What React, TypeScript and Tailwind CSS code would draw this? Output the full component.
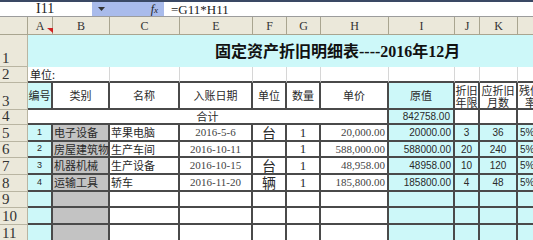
import React from "react";

const SERIF = "font-[family-name:Liberation_Serif,Noto_Sans_CJK_SC,serif]";
const SANS = "font-[family-name:Liberation_Sans,Noto_Sans_CJK_SC,sans-serif]";
const CJK = "font-[family-name:Noto_Sans_CJK_SC,sans-serif]";

const RH =
  "flex items-end pl-[2px] bg-[#ebe8da] border-r border-b border-[#b9b5a2] text-[15px] leading-[15px] text-[#333] font-[family-name:Liberation_Serif,serif]";
const CH =
  "flex items-center justify-center bg-[#ebe8da] border-r border-b border-[#a9a590] text-[12px] text-[#333] font-[family-name:Liberation_Serif,serif]";
const T = "flex items-center whitespace-nowrap overflow-visible border-r-2 border-b-2 border-[#4a4a4a] text-[#2a2a2a]";
const CY = "bg-[#cdf8f9]";
const GR = "bg-[#c3c3c3]";

function Cell({ className = "", children }: { className?: string; children?: React.ReactNode }) {
  return <div className={`${T} ${className}`}>{children}</div>;
}

type Row = {
  n: number;
  id: string;
  cat: string;
  name: string;
  date: string;
  unit: string;
  qty: string;
  price: string;
  orig: string;
  yrs: string;
  months: string;
  rate: string;
};

const data: Row[] = [
  { n: 5, id: "1", cat: "电子设备", name: "苹果电脑", date: "2016-5-6", unit: "台", qty: "1", price: "20,000.00", orig: "20000.00", yrs: "3", months: "36", rate: "5%" },
  { n: 6, id: "2", cat: "房屋建筑物", name: "生产车间", date: "2016-10-11", unit: "", qty: "1", price: "588,000.00", orig: "588000.00", yrs: "20", months: "240", rate: "5%" },
  { n: 7, id: "3", cat: "机器机械", name: "生产设备", date: "2016-10-15", unit: "台", qty: "1", price: "48,958.00", orig: "48958.00", yrs: "10", months: "120", rate: "5%" },
  { n: 8, id: "4", cat: "运输工具", name: "轿车", date: "2016-11-20", unit: "辆", qty: "1", price: "185,800.00", orig: "185800.00", yrs: "4", months: "48", rate: "5%" },
];

export default function App() {
  return (
    <div className={`relative w-[533px] h-[240px] overflow-hidden bg-white ${CJK}`}>
      {/* formula bar */}
      <div className="h-[2px] bg-[#3a4864]" />
      <div className="flex h-[15px] border-b border-[#9c9c9c]">
        <div className={`w-[92px] flex items-center pl-[36px] text-[14px] leading-none text-[#222] ${SERIF}`}>I11</div>
        <div className="w-[72px] bg-[#a9bbeb] flex items-center justify-between pl-[6px] pr-[6px]">
          <svg width="7" height="4" viewBox="0 0 7 4">
            <path d="M0 0 L7 0 L3.5 4 Z" fill="#333" />
          </svg>
          <span className={`italic text-[12px] leading-none text-[#222] ${SERIF}`}>
            f<span className="text-[9px]">x</span>
          </span>
        </div>
        <div className={`flex-1 flex items-center pl-[7px] text-[13px] leading-none text-[#222] ${SERIF}`}>=G11*H11</div>
      </div>

      {/* sheet */}
      <div className="grid grid-cols-[28px_25px_57px_70px_73px_34px_34px_68px_66px_25px_38px_40px] grid-rows-[18px_32px_16px_27px_15px_17px_16px_17px_17px_16px_17px_17px]">
        {/* column headers */}
        <div className={CH} />
        {["A", "B", "C", "E", "F", "G", "H", "I", "J", "K", "L"].map((c) => (
          <div key={c} className={CH}>
            {c}
          </div>
        ))}

        {/* row 1 */}
        <div className={RH}>1</div>
        <div className={`col-span-11 ${CY} flex items-center pl-[187px] pt-[1px] whitespace-nowrap`}>
          <span className={`text-[16px] font-bold text-[#111] leading-none ${SERIF}`}>固定资产折旧明细表----2016年12月</span>
        </div>

        {/* row 2 */}
        <div className={RH}>2</div>
        <div className="col-span-2 flex items-center pl-[2px] text-[11px] text-[#222] border-r border-[#d6d6d6] border-b-2 border-b-[#4a4a4a]">单位:</div>
        {Array.from({ length: 9 }).map((_, i) => (
          <div key={i} className="border-r border-[#d6d6d6] border-b-2 border-b-[#4a4a4a]" />
        ))}

        {/* row 3 */}
        <div className={RH}>3</div>
        <Cell className={`${CY} justify-center text-[11px]`}>编号</Cell>
        <Cell className="justify-center text-[11px]">类别</Cell>
        <Cell className="justify-center text-[11px]">名称</Cell>
        <Cell className="justify-center text-[11px]">入账日期</Cell>
        <Cell className="justify-center text-[11px]">单位</Cell>
        <Cell className="justify-center text-[11px]">数量</Cell>
        <Cell className="justify-center text-[11px]">单价</Cell>
        <Cell className={`${CY} justify-center text-[11px]`}>原值</Cell>
        <Cell className="flex-col justify-center text-[11px] leading-[12px]">
          <span>折旧</span>
          <span>年限</span>
        </Cell>
        <Cell className="flex-col justify-center text-[11px] leading-[12px]">
          <span>应折旧</span>
          <span>月数</span>
        </Cell>
        <Cell className="flex-col items-start pl-[1px] justify-center text-[11px] leading-[12px]">
          <span>残值</span>
          <span className="pl-[6px]">率</span>
        </Cell>

        {/* row 4 */}
        <div className={RH}>4</div>
        <Cell className="col-span-7 justify-center text-[11px]">合计</Cell>
        <Cell className={`${CY} justify-end pr-[3px] text-[10px] ${SANS}`}>842758.00</Cell>
        <Cell />
        <Cell />
        <Cell />

        {/* data rows */}
        {data.map((r) => (
          <React.Fragment key={r.n}>
            <div className={RH}>{r.n}</div>
            <Cell className={`${CY} justify-center text-[9px] ${SANS}`}>{r.id}</Cell>
            <Cell className={`${GR} pl-[1px] text-[11px]`}>{r.cat}</Cell>
            <Cell className="pl-[1px] text-[11px]">{r.name}</Cell>
            <Cell className={`justify-center text-[11px] text-[#444] ${SERIF}`}>{r.date}</Cell>
            <Cell className="justify-center text-[14px]">{r.unit}</Cell>
            <Cell className={`justify-center text-[13px] ${SERIF}`}>{r.qty}</Cell>
            <Cell className={`justify-end pr-[2px] text-[11px] text-[#444] ${SERIF}`}>{r.price}</Cell>
            <Cell className={`${CY} justify-end pr-[2px] text-[10px] ${SANS}`}>{r.orig}</Cell>
            <Cell className={`${CY} justify-center text-[10px] ${SANS}`}>{r.yrs}</Cell>
            <Cell className={`${CY} justify-center text-[10px] ${SANS}`}>{r.months}</Cell>
            <Cell className={`${CY} pl-[2px] text-[10px] ${SANS}`}>{r.rate}</Cell>
          </React.Fragment>
        ))}

        {/* empty rows */}
        {[9, 10, 11].map((n) => (
          <React.Fragment key={n}>
            <div className={RH}>{n}</div>
            <Cell className={CY} />
            <Cell className={GR} />
            <Cell />
            <Cell />
            <Cell />
            <Cell />
            <Cell />
            <Cell className={CY} />
            <Cell className={CY} />
            <Cell className={CY} />
            <Cell className={CY} />
          </React.Fragment>
        ))}
      </div>

      {/* comment indicator */}
      <svg className="absolute left-[47px] top-[28px]" width="6" height="5" viewBox="0 0 6 5">
        <path d="M0 0 L6 0 L6 5 Z" fill="#d02020" />
      </svg>
    </div>
  );
}
